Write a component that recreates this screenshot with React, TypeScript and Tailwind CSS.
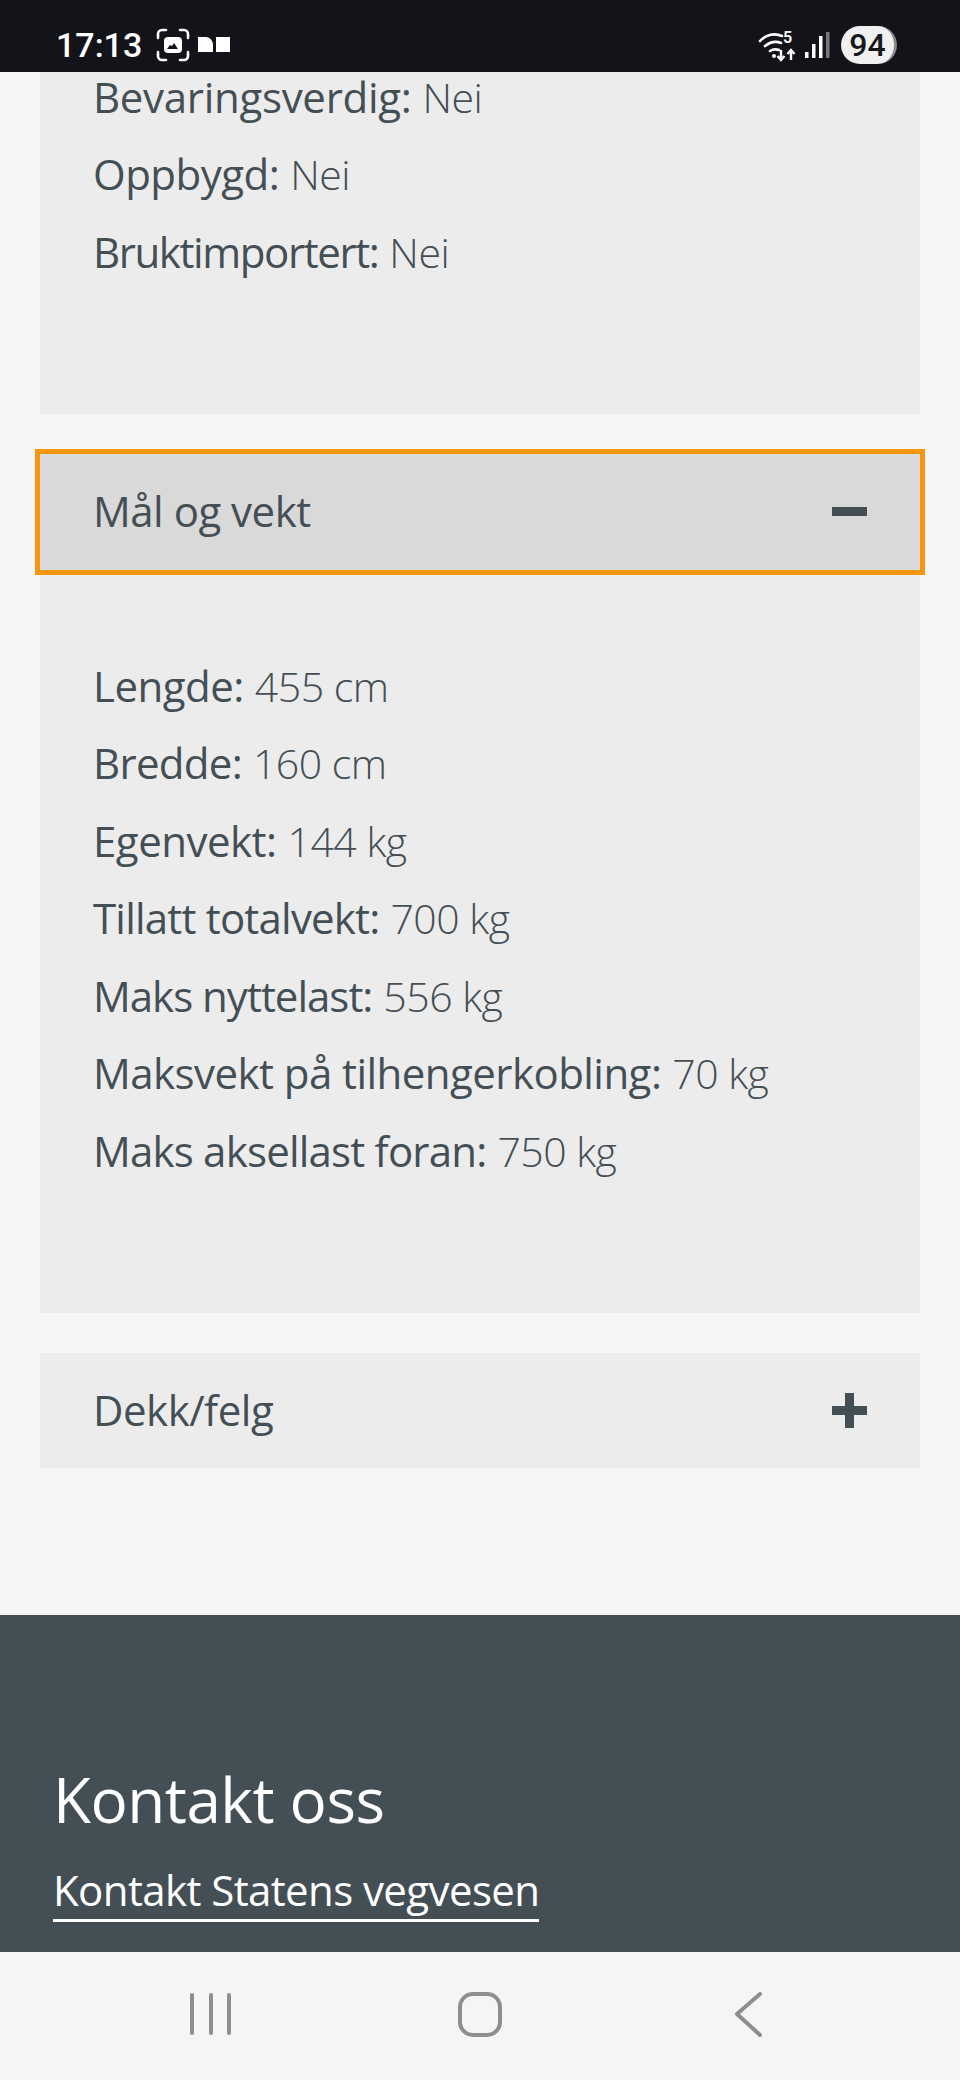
const bodyFont = "font-['Open_Sans',sans-serif]";

function Row({ label, value, track = "tracking-[-0.5px]" }: { label: string; value: string; track?: string }) {
  return (
    <p className="whitespace-nowrap py-[15.750px] text-[42px] leading-[46px]">
      <span className={`font-normal ${track}`}>{label}:</span>{" "}
      <span className="text-[41px] font-light tracking-[-0.5px]">{value}</span>
    </p>
  );
}

function StatusBar() {
  return (
    <header className="relative z-10 flex h-[72px] shrink-0 items-center justify-between bg-[#12141a] pl-[56px] pr-[63px] pt-[18px] text-white">
      <div className="flex items-center">
        <span className="font-['Roboto',sans-serif] text-[34px] font-medium leading-none">17:13</span>
        <svg width="36" height="34" viewBox="0 0 36 34" className="ml-[13px]" fill="none">
          <path d="M3 10V6a4 4 0 0 1 4-4h4M25 2h4a4 4 0 0 1 4 4v4M33 24v4a4 4 0 0 1-4 4h-4M11 32H7a4 4 0 0 1-4-4v-4" stroke="#fff" strokeWidth="2.6" strokeLinecap="round" />
          <rect x="9" y="9" width="18" height="16" rx="4" fill="#fff" />
          <path d="M12 21l3-4 2 1 2-3 4 6z" fill="#12141a" />
        </svg>
        <svg width="33" height="16" viewBox="0 0 33 16" className="ml-[7px]" fill="#fff">
          <path d="M0 0h8c4 0 7 4 7 8v7H0z" />
          <rect x="18" y="0" width="14" height="15" />
        </svg>
      </div>
      <div className="flex items-center">
        <svg width="40" height="36" viewBox="0 0 40 36" fill="none">
          <path d="M2 14C8 7 17 6 24 9M7 19c5-4 11-5 16-3M12 24c3-2 6-2 9-1" stroke="#fff" strokeWidth="2.6" strokeLinecap="round" />
          <circle cx="16" cy="29" r="2" fill="#fff" />
          <path d="M23 23v10M19.500 29l3.500 4 3.500-4M33 33V23M29.500 27l3.500-4 3.500 4" stroke="#fff" strokeWidth="2.400" />
          <text x="25" y="16" fontSize="16" fontWeight="600" fontFamily="Roboto, sans-serif" fill="#fff">5</text>
        </svg>
        <svg width="26" height="28" viewBox="0 0 26 28" className="ml-[6px]">
          <rect x="1" y="21" width="3.500" height="6" fill="#fff" />
          <rect x="8" y="13" width="3.500" height="14" fill="#fff" />
          <rect x="15" y="5" width="3.500" height="22" fill="#fff" />
          <rect x="22" y="1" width="3.500" height="26" fill="#777" />
        </svg>
        <div className="ml-[11px] flex h-[38px] w-[56px] items-center justify-center rounded-[19px] border-r-[3px] border-[#8a8a8a] bg-[#f0f0f0] font-['Roboto',sans-serif] text-[32px] font-medium leading-none text-[#17181c]">
          94
        </div>
      </div>
    </header>
  );
}

function NavBar() {
  return (
    <nav className="flex h-[128px] shrink-0 items-start bg-[#f5f5f5] pt-[40px]">
      <svg width="960" height="46" viewBox="0 0 960 46" fill="none" stroke="#8e8e8e" strokeWidth="4" strokeLinecap="round" strokeLinejoin="round">
        <path d="M192 3v38M211 3v38M229 3v38" />
        <rect x="460" y="2" width="40" height="41" rx="13" />
        <path d="M760 2L737 22l23 21" />
      </svg>
    </nav>
  );
}

export default function App() {
  return (
    <div className={`flex h-[2080px] w-[960px] flex-col overflow-hidden bg-[#f5f5f5] text-[#444f55] ${bodyFont}`}>
      <StatusBar />
      <main className="flex-1 overflow-hidden">
        <section className="mx-[40px] -mt-[14px] bg-[#ececec] pb-[123px] pl-[53px]">
          <Row label="Bevaringsverdig" value="Nei" track="tracking-[-0.3px]" />
          <Row label="Oppbygd" value="Nei" />
          <Row label="Bruktimportert" value="Nei" track="tracking-[-1.4px]" />
        </section>

        <section className="mx-[40px] mt-[35px] bg-[#ececec] pb-[123.500px]">
          <div className="-mx-[5px] flex h-[126px] items-center justify-between border-[5px] border-[#f7970f] bg-[#d9d9d9] pl-[53px] pr-[53px]">
            <span className="-mt-[2px] text-[42px] tracking-[-0.5px]">Mål og vekt</span>
            <span className="block h-[9px] w-[35px] bg-[#444f55]" />
          </div>
          <div className="pl-[53px] pt-[72.500px]">
            <Row label="Lengde" value="455 cm" />
            <Row label="Bredde" value="160 cm" track="tracking-[-0.7px]" />
            <Row label="Egenvekt" value="144 kg" />
            <Row label="Tillatt totalvekt" value="700 kg" track="tracking-[-0.8px]" />
            <Row label="Maks nyttelast" value="556 kg" track="tracking-[-1px]" />
            <Row label="Maksvekt på tilhengerkobling" value="70 kg" track="tracking-[-0.55px]" />
            <Row label="Maks aksellast foran" value="750 kg" track="tracking-[-0.8px]" />
          </div>
        </section>

        <section className="mx-[40px] mt-[40px] flex h-[115px] items-center justify-between bg-[#ececec] pl-[53px] pr-[53px]">
          <span className="-mt-[2px] text-[42px] tracking-[-0.5px]">Dekk/felg</span>
          <span className="relative block h-[35px] w-[35px]">
            <span className="absolute left-0 top-[13px] h-[9px] w-[35px] bg-[#444f55]" />
            <span className="absolute left-[13px] top-0 h-[35px] w-[9px] bg-[#444f55]" />
          </span>
        </section>

        <footer className="mt-[147px] h-[340px] bg-[#444f55] pl-[53px] pt-[147px] text-white">
          <h2 className="text-[62px] font-normal leading-[74px] tracking-[-0.5px]">Kontakt oss</h2>
          <a className="mt-[25px] inline-block border-b-[3px] border-white text-[42px] leading-[58px] tracking-[-0.6px]">Kontakt Statens vegvesen</a>
        </footer>
      </main>
      <NavBar />
    </div>
  );
}
